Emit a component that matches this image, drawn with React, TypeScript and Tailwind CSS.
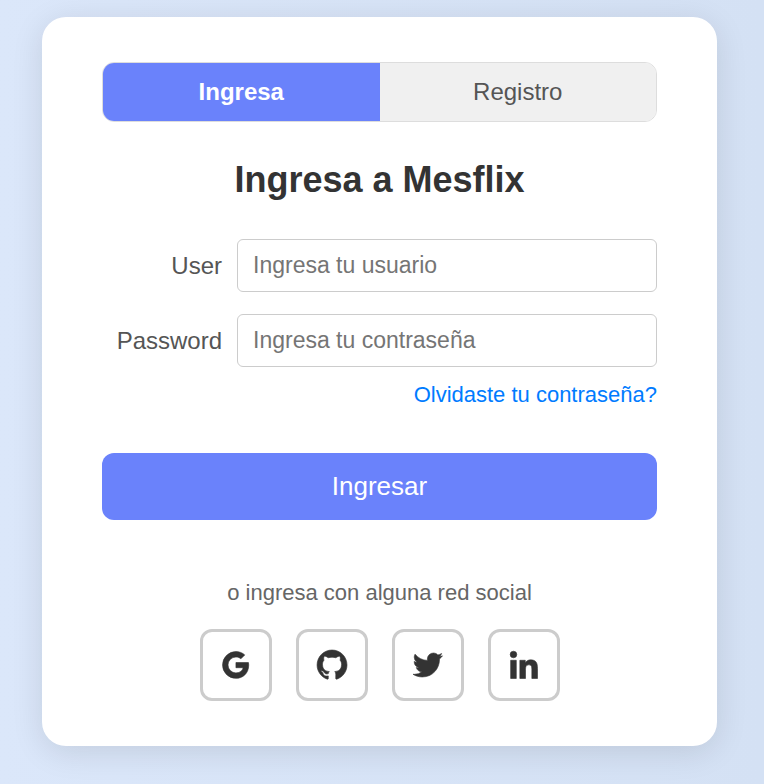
import { BiLogoGithub, BiLogoGoogle, BiLogoLinkedin, BiLogoTwitter } from "react-icons/bi";

const networks = [
  { name: "Google", Icon: BiLogoGoogle },
  { name: "GitHub", Icon: BiLogoGithub },
  { name: "Twitter", Icon: BiLogoTwitter },
  { name: "LinkedIn", Icon: BiLogoLinkedin },
];

const fields = [
  { id: "user", label: "User", type: "text", placeholder: "Ingresa tu usuario" },
  { id: "password", label: "Password", type: "password", placeholder: "Ingresa tu contraseña" },
];

export default function App() {
  return (
    <div className="min-h-screen bg-linear-to-r from-[#dbe7fa] to-[#d4e1f4] py-[17px] pr-[47px] pl-[42px] font-['Liberation_Sans',Arial,sans-serif]">
      <main className="rounded-3xl bg-white px-[60px] py-[45px] shadow-[0_6px_32px_rgba(0,0,0,0.11)]">
        <div className="flex h-[60px] overflow-hidden rounded-xl border border-[#dddddd] text-2xl">
          <button type="button" className="flex-1 bg-[#6a82fb] font-bold text-white">Ingresa</button>
          <button type="button" className="flex-1 bg-[#f0f0f0] text-[#555555]">Registro</button>
        </div>
        <h1 className="mt-9 text-center text-4xl leading-[43px] font-bold text-[#333333]">Ingresa a Mesflix</h1>
        <form onSubmit={(e) => e.preventDefault()}>
          <div className="mt-[38px] flex flex-col gap-[22px]">
            {fields.map((f) => (
              <div key={f.id} className="flex items-center gap-[15px]">
                <label htmlFor={f.id} className="w-[120px] text-right text-2xl text-[#555555]">{f.label}</label>
                <input id={f.id} type={f.type} placeholder={f.placeholder} className="h-[53px] min-w-0 flex-1 rounded-md border border-[#cccccc] px-[15px] text-[23px] text-[#333333] placeholder:text-[#757575]" />
              </div>
            ))}
          </div>
          <div className="mt-3 text-right text-[22px] leading-8">
            <a href="#" className="text-[#007bff]">Olvidaste tu contraseña?</a>
          </div>
          <button type="submit" className="mt-[42px] h-[67px] w-full rounded-xl bg-[#6a82fb] text-[26px] text-white">Ingresar</button>
        </form>
        <p className="mt-[57px] text-center text-[22px] leading-8 text-[#666666]">o ingresa con alguna red social</p>
        <div className="mt-5 flex justify-center gap-6">
          {networks.map(({ name, Icon }) => (
            <button key={name} type="button" aria-label={name} className="flex size-[72px] items-center justify-center rounded-xl border-3 border-[#cccccc] text-4xl text-[#333333]">
              <Icon className="stroke-[0.4]" />
            </button>
          ))}
        </div>
      </main>
    </div>
  );
}
